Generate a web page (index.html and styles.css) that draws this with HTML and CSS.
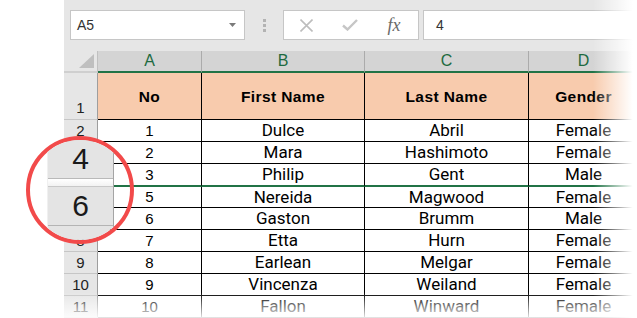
FILE: index.html
```html
<!DOCTYPE html>
<html>
<head>
<meta charset="utf-8">
<link rel="stylesheet" href="styles.css">
</head>
<body>
<div class="page">
  <div class="gutter"></div>
  <div class="excel">
    <div class="fbar">
      <div class="namebox">
        <span>A5</span>
        <svg class="dd" width="7" height="4" viewBox="0 0 7 4"><path d="M0 0H7L3.5 4Z" fill="#7a7a7a"/></svg>
      </div>
      <div class="grip"><i></i><i></i><i></i></div>
      <div class="fbtns">
        <div class="fbtn"><svg width="13" height="13" viewBox="0 0 13 13"><path d="M0.5 0.5L12.5 12.5M12.5 0.5L0.5 12.5" stroke="#bdbdbd" stroke-width="1.6" fill="none"/></svg></div>
        <div class="fbtn"><svg width="16" height="12" viewBox="0 0 16 12"><path d="M1 6.5L5.5 10.5L15 1" stroke="#c6c6c6" stroke-width="2.4" fill="none"/></svg></div>
        <div class="fbtn fx">fx</div>
      </div>
      <div class="finput">4</div>
    </div>
    <div class="sheet">
      <div class="row colhead">
        <div class="corner"><svg width="15" height="14" viewBox="0 0 15 14"><path d="M15 0V14H0Z" fill="#bfbfbf"/></svg></div>
        <div class="ch">A</div><div class="ch">B</div><div class="ch">C</div><div class="ch">D</div>
      </div>
      <div class="row r1">
        <div class="rh">1</div>
        <div class="c hd">No</div><div class="c hd">First Name</div><div class="c hd">Last Name</div><div class="c hd">Gender</div>
      </div>
      <div class="row">
        <div class="rh">2</div><div class="c num">1</div><div class="c">Dulce</div><div class="c">Abril</div><div class="c">Female</div>
      </div>
      <div class="row">
        <div class="rh covered">3</div><div class="c num">2</div><div class="c">Mara</div><div class="c">Hashimoto</div><div class="c">Female</div>
      </div>
      <div class="row r4">
        <div class="rh covered">4</div><div class="c num">3</div><div class="c">Philip</div><div class="c">Gent</div><div class="c">Male</div>
      </div>
      <div class="row r6">
        <div class="rh covered">6</div><div class="c num">5</div><div class="c">Nereida</div><div class="c">Magwood</div><div class="c">Female</div>
      </div>
      <div class="row">
        <div class="rh covered">7</div><div class="c num">6</div><div class="c">Gaston</div><div class="c">Brumm</div><div class="c">Male</div>
      </div>
      <div class="row">
        <div class="rh">8</div><div class="c num">7</div><div class="c">Etta</div><div class="c">Hurn</div><div class="c">Female</div>
      </div>
      <div class="row">
        <div class="rh">9</div><div class="c num">8</div><div class="c">Earlean</div><div class="c">Melgar</div><div class="c">Female</div>
      </div>
      <div class="row">
        <div class="rh">10</div><div class="c num">9</div><div class="c">Vincenza</div><div class="c">Weiland</div><div class="c">Female</div>
      </div>
      <div class="row">
        <div class="rh">11</div><div class="c num">10</div><div class="c">Fallon</div><div class="c">Winward</div><div class="c">Female</div>
      </div>
    </div>
  </div>

  <div class="mag">
    <div class="mag-panel">
      <div class="mcell m4">4</div>
      <div class="mgap"></div>
      <div class="mcell m6">6</div>
    </div>
  </div>

  <div class="fade-right"></div>
  <div class="fade-bottom"></div>
</div>
</body>
</html>
```
FILE: styles.css
```css
html, body {
  margin: 0;
  padding: 0;
  background: #fff;
}

.page {
  position: relative;
  width: 637px;
  height: 318px;
  overflow: hidden;
  display: flex;
  font-family: "Liberation Sans", Arial, sans-serif;
  color: #000;
}

.gutter {
  flex: 0 0 64px;
  background: #fff;
}

.excel {
  flex: 0 0 620px;
  display: flex;
  flex-direction: column;
}

/* formula bar */
.fbar {
  height: 52px;
  box-sizing: border-box;
  background: #e6e6e6;
  display: flex;
  align-items: flex-start;
  padding: 10px 0 0 6px;
}

.namebox {
  width: 175px;
  height: 30px;
  box-sizing: border-box;
  border: 1px solid #c6c6c6;
  background: #fff;
  display: flex;
  align-items: center;
  justify-content: space-between;
  padding: 0 8px 0 6px;
  font-size: 14px;
  color: #333;
}

.dd {
  display: block;
}

.grip {
  width: 38px;
  height: 30px;
  display: flex;
  flex-direction: column;
  align-items: center;
  justify-content: center;
  gap: 2px;
}

.grip i {
  display: block;
  width: 3px;
  height: 3px;
  background: #b3b3b3;
}

.fbtns {
  width: 136px;
  height: 30px;
  box-sizing: border-box;
  border: 1px solid #c6c6c6;
  background: #fff;
  display: flex;
  align-items: center;
}

.fbtn {
  width: 44px;
  display: flex;
  align-items: center;
  justify-content: center;
}

.fbtn svg {
  display: block;
}

.fx {
  font-family: "Liberation Serif", "Times New Roman", serif;
  font-style: italic;
  font-size: 18px;
  color: #6a6a6a;
}

.finput {
  flex: 1;
  margin-left: 4px;
  height: 30px;
  box-sizing: border-box;
  border: 1px solid #c6c6c6;
  background: #fff;
  padding-left: 12px;
  font-size: 14px;
  line-height: 28px;
  color: #333;
}

/* sheet */
.row {
  display: grid;
  grid-template-columns: 34px 104px 163px 164px 110px;
  height: 22px;
}

.row > div {
  box-sizing: border-box;
}

.colhead {
  height: 22px;
  background: #d4d4d4;
}

.corner {
  background: #e6e6e6;
  border-right: 1px solid #c0c0c0;
  border-bottom: 2px solid #cfcfcf;
  display: flex;
  align-items: flex-end;
  justify-content: flex-end;
  padding: 0 3px 3px 0;
}

.ch {
  border-right: 1px solid #ababab;
  border-bottom: 2px solid #217346;
  text-align: center;
  font-size: 16px;
  line-height: 20px;
  color: #1d6a40;
}

.rh {
  background: #e6e6e6;
  border-right: 1px solid #9e9e9e;
  border-bottom: 1px solid #c6c6c6;
  display: flex;
  align-items: flex-end;
  justify-content: center;
  font-size: 15px;
  line-height: 21px;
  color: #222;
}

.rh.covered {
  visibility: hidden;
}

.c {
  border-right: 1px solid #000;
  border-bottom: 1px solid #000;
  display: flex;
  align-items: flex-end;
  justify-content: center;
  font-family: Roboto, "Liberation Sans", sans-serif;
  font-size: 17px;
  line-height: 21px;
  white-space: nowrap;
}

.c.num {
  font-family: "Liberation Sans", Arial, sans-serif;
  font-size: 15px;
}

.r1 {
  height: 47px;
}

.r1 .rh {
  padding-bottom: 1px;
}

.c.hd {
  background: #f8cbad;
  align-items: center;
  font-family: "Liberation Sans", Arial, sans-serif;
  font-weight: bold;
  font-size: 15.5px;
  letter-spacing: 0.4px;
}

.r4 {
  height: 23px;
}

.r4 .c {
  border-bottom: 2px solid #217346;
}

.r4 .rh {
  border-bottom: 2px solid #c6c6c6;
}

.r6 {
  height: 21px;
}

.r6 .c, .r6 .rh {
  line-height: 20px;
}

/* magnifier */
.mag {
  position: absolute;
  left: 26px;
  top: 136px;
  width: 108px;
  height: 108px;
  box-sizing: border-box;
  border: 4px solid #f24a4a;
  border-radius: 50%;
  overflow: hidden;
  background: transparent;
}

.mag-panel {
  position: absolute;
  left: 17px;
  top: 0;
  width: 67px;
  height: 100px;
  box-sizing: border-box;
  background: #e4e4e4;
  border-right: 1px solid #a5a5a5;
  border-left: 1px solid #f0f0f0;
}

.mcell {
  height: 39px;
  box-sizing: border-box;
  text-align: center;
  font-size: 30px;
  line-height: 38px;
  color: #1a1a1a;
}

.m4 {
  border-bottom: 1px solid #b9b9b9;
}

.m6 {
  border-bottom: 1px solid #b4b4b4;
}

.mgap {
  height: 8px;
  box-sizing: border-box;
  background: linear-gradient(#ffffff, #f2f2f2);
  border-bottom: 1px solid #c8c8c8;
}

/* fades */
.fade-right {
  position: absolute;
  top: 0;
  right: 0;
  width: 44px;
  height: 100%;
  background: linear-gradient(to right, rgba(255,255,255,0), #fff 90%);
}

.fade-bottom {
  position: absolute;
  left: 0;
  bottom: 0;
  width: 100%;
  height: 26px;
  background: linear-gradient(to bottom, rgba(255,255,255,0), rgba(255,255,255,0.9));
}
```
